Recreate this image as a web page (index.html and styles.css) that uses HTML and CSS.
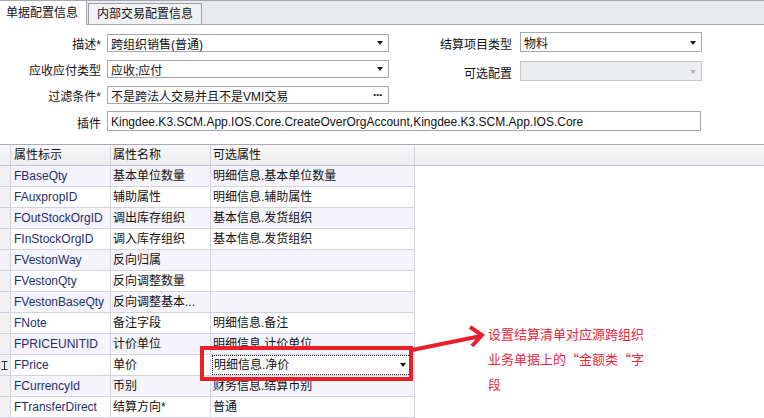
FILE: index.html
```html
<!DOCTYPE html>
<html lang="zh">
<head>
<meta charset="utf-8">
<link rel="stylesheet" href="styles.css">
</head>
<body>
<div class="page">
  <div class="tabbar">
    <div class="tab active">单据配置信息</div>
    <div class="tab">内部交易配置信息</div>
  </div>

  <div class="form">
    <div class="top">
      <div class="col-left">
        <div class="row">
          <span class="lbl">描述*</span>
          <div class="field"><span class="val">跨组织销售(普通)</span><span class="arrow"></span></div>
        </div>
        <div class="row">
          <span class="lbl">应收应付类型</span>
          <div class="field"><span class="val">应收;应付</span><span class="arrow"></span></div>
        </div>
        <div class="row">
          <span class="lbl">过滤条件*</span>
          <div class="field"><span class="val">不是跨法人交易并且不是VMI交易</span><span class="dots">···</span></div>
        </div>
      </div>
      <div class="col-right">
        <div class="row">
          <span class="lbl">结算项目类型</span>
          <div class="field tall"><span class="val">物料</span><span class="arrow"></span></div>
        </div>
        <div class="row">
          <span class="lbl">可选配置</span>
          <div class="field tall disabled"><span class="val"></span><span class="arrow light"></span></div>
        </div>
      </div>
    </div>
    <div class="row plugin">
      <span class="lbl">插件</span>
      <div class="field tall wide"><span class="val">Kingdee.K3.SCM.App.IOS.Core.CreateOverOrgAccount,Kingdee.K3.SCM.App.IOS.Core</span></div>
    </div>
  </div>

  <div class="grid">
    <div class="grow head">
      <div class="c0"></div>
      <div class="c c1">属性标示</div>
      <div class="c c2">属性名称</div>
      <div class="c c3">可选属性</div>
      <div class="fill"></div>
    </div>
    <div class="grow alt"><div class="c0"></div><div class="c c1 key">FBaseQty</div><div class="c c2">基本单位数量</div><div class="c c3">明细信息.基本单位数量</div></div>
    <div class="grow"><div class="c0"></div><div class="c c1 key">FAuxpropID</div><div class="c c2">辅助属性</div><div class="c c3">明细信息.辅助属性</div></div>
    <div class="grow alt"><div class="c0"></div><div class="c c1 key">FOutStockOrgID</div><div class="c c2">调出库存组织</div><div class="c c3">基本信息.发货组织</div></div>
    <div class="grow"><div class="c0"></div><div class="c c1 key">FInStockOrgID</div><div class="c c2">调入库存组织</div><div class="c c3">基本信息.发货组织</div></div>
    <div class="grow alt"><div class="c0"></div><div class="c c1 key">FVestonWay</div><div class="c c2">反向归属</div><div class="c c3"></div></div>
    <div class="grow"><div class="c0"></div><div class="c c1 key">FVestonQty</div><div class="c c2">反向调整数量</div><div class="c c3"></div></div>
    <div class="grow alt"><div class="c0"></div><div class="c c1 key">FVestonBaseQty</div><div class="c c2">反向调整基本...</div><div class="c c3"></div></div>
    <div class="grow"><div class="c0"></div><div class="c c1 key">FNote</div><div class="c c2">备注字段</div><div class="c c3">明细信息.备注</div></div>
    <div class="grow alt"><div class="c0"></div><div class="c c1 key">FPRICEUNITID</div><div class="c c2">计价单位</div><div class="c c3">明细信息.计价单位</div></div>
    <div class="grow">
      <div class="c0 marker"><svg width="7" height="9" viewBox="0 0 7 9"><path d="M0.5 0.5H6.5M3.5 0.5V8.5M0.5 8.5H6.5" stroke="#333" stroke-width="1" fill="none"/></svg></div>
      <div class="c c1 key">FPrice</div><div class="c c2">单价</div>
      <div class="c c3 editing"><div class="focusbox"><span class="val">明细信息.净价</span><span class="arrow"></span></div></div>
    </div>
    <div class="grow alt"><div class="c0"></div><div class="c c1 key">FCurrencyId</div><div class="c c2">币别</div><div class="c c3">财务信息.结算币别</div></div>
    <div class="grow"><div class="c0"></div><div class="c c1 key">FTransferDirect</div><div class="c c2">结算方向*</div><div class="c c3">普通</div></div>
    <div class="grow alt"><div class="c0"></div><div class="c c1 key"></div><div class="c c2"></div><div class="c c3"></div></div>
  </div>

  <div class="redbox"></div>
  <svg class="redarrow" width="100" height="40" viewBox="0 0 100 40">
    <path d="M12 30 L81 16" stroke="#e8202a" stroke-width="4" fill="none"/>
    <path d="M70 7 L82 15 L72 26" stroke="#e8202a" stroke-width="4" fill="none" stroke-linejoin="miter"/>
  </svg>
  <div class="note">
    <div>设置结算清单对应源跨组织</div>
    <div>业务单据上的“金额类“字</div>
    <div>段</div>
  </div>
</div>
</body>
</html>
```

FILE: styles.css
```css
* { box-sizing: border-box; }
html, body {
  margin: 0;
  padding: 0;
}
body {
  width: 764px;
  height: 418px;
  overflow: hidden;
  background: #fff;
  font-family: "Liberation Sans", "Noto Sans CJK SC", sans-serif;
  font-size: 12px;
  color: #111;
}
.page {
  position: relative;
  width: 764px;
  height: 418px;
  overflow: hidden;
}

/* tabs */
.tabbar {
  display: flex;
  align-items: flex-end;
  height: 25px;
  background: #e9eaee;
  border-top: 1px solid #a8a9b0;
  border-bottom: 1px solid #a8a9b0;
}
.tab {
  width: 114px;
  height: 21px;
  margin-left: 1px;
  padding-left: 8px;
  border: 1px solid #a0a1a8;
  border-bottom: none;
  background: #f0f1f4;
  line-height: 21px;
  white-space: nowrap;
}
.tab.active {
  width: 87px;
  height: 24px;
  margin-left: 0;
  margin-bottom: -1px;
  padding-left: 6px;
  border: none;
  border-right: 1px solid #a8a9b0;
  background: #fff;
  line-height: 24px;
}

/* form */
.form { padding-top: 8px; }
.top { display: flex; }
.col-left {
  display: flex;
  flex-direction: column;
  gap: 7px;
}
.col-right {
  display: flex;
  flex-direction: column;
  gap: 9px;
  margin-top: -1px;
}
.row {
  display: flex;
  align-items: center;
}
.lbl {
  width: 101px;
  margin-right: 6px;
  text-align: right;
  white-space: nowrap;
  padding-top: 2px;
}
.col-right .lbl {
  width: 123px;
  margin-right: 8px;
}
.field {
  display: flex;
  align-items: center;
  width: 282px;
  height: 18px;
  padding: 1px 5px 0 3px;
  border: 1px solid #a6a8ae;
  background: #fff;
  white-space: nowrap;
  overflow: hidden;
}
.field.tall { height: 20px; width: 182px; }
.field.wide { width: 594px; }
.field.disabled {
  background: #eceef1;
  border-color: #c4c6cb;
}
.val { flex: 1; overflow: hidden; }
.arrow {
  width: 0;
  height: 0;
  border-left: 3.5px solid transparent;
  border-right: 3.5px solid transparent;
  border-top: 4px solid #1a1a1a;
}
.arrow.light { border-top-color: #b4b6bb; }
.dots {
  font-weight: bold;
  letter-spacing: -1px;
  margin-right: 1px;
}
.plugin { margin-top: 7px; }

/* grid */
.grid { margin-top: 13px; }
.grow {
  display: flex;
  height: 21px;
}
.grow.head {
  height: 22px;
  border-top: 1px solid #a9aab2;
  border-bottom: 1px solid #c4c4cc;
  background: linear-gradient(#f8f8f9, #ededf0);
}
.c0, .c {
  flex: none;
  height: 100%;
  border-right: 1px solid #d4d4dc;
  border-bottom: 1px solid #d4d4dc;
  white-space: nowrap;
  overflow: hidden;
  line-height: 20px;
}
.head .c0, .head .c { border-bottom: none; line-height: 21px; }
.c0 {
  width: 11px;
  background: #f1f1f4;
}
.head .c0 { background: transparent; }
.marker {
  display: flex;
  align-items: center;
  padding-left: 1px;
}
.c { padding-left: 3px; }
.c1 { width: 100px; }
.c2 { width: 100px; padding-left: 2px; }
.c3 { width: 204px; padding-left: 2px; }
.fill { flex: 1; }
.key { color: #1f2e6e; }
.alt .c { background: #f5f3fc; }
.head .c { background: transparent; }
.c3.editing { padding: 0 3px 0 1px; }
.focusbox {
  display: flex;
  align-items: center;
  height: 100%;
  padding: 0 4px 0 1px;
  border: 1px dotted #222;
}

/* annotation overlay */
.redbox {
  position: absolute;
  left: 200px;
  top: 346px;
  width: 213px;
  height: 35px;
  border: 4px solid #e8202a;
}
.redarrow {
  position: absolute;
  left: 400px;
  top: 320px;
}
.note {
  position: absolute;
  left: 488px;
  top: 321px;
  color: #e8283c;
  font-family: "Noto Sans CJK SC", sans-serif;
  font-size: 13px;
  line-height: 25px;
  white-space: nowrap;
}
```
